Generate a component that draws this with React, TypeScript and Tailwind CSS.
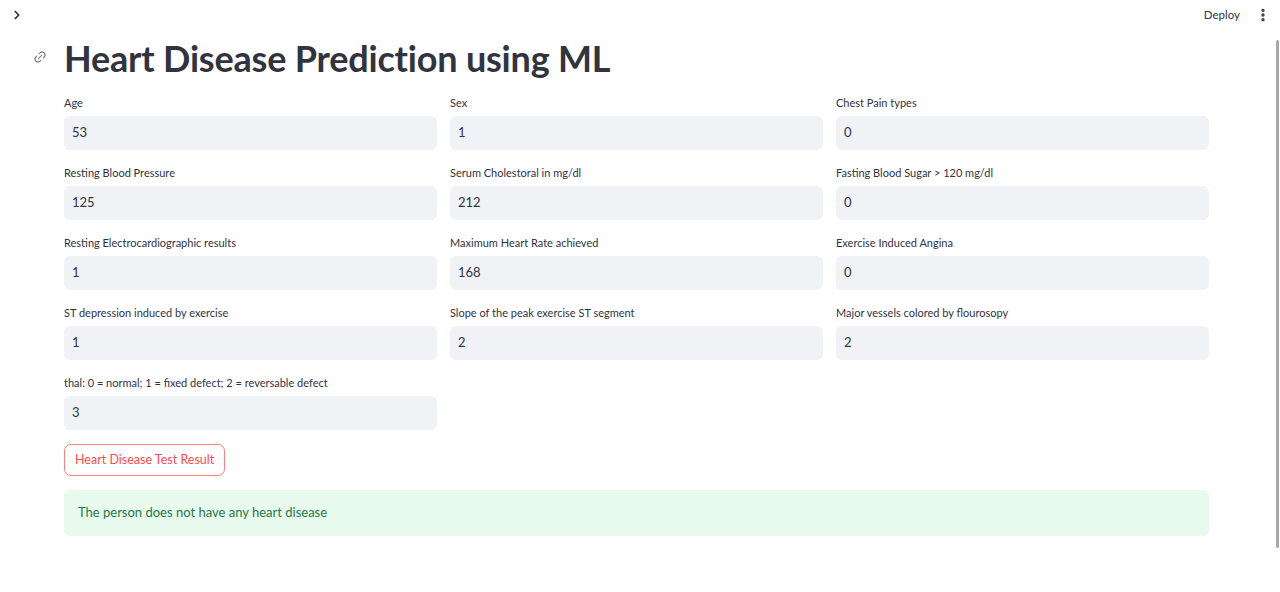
import { ChevronRight, EllipsisVertical, Link2 } from "lucide-react";

const FIELDS = [
  { label: "Age", value: "53" },
  { label: "Sex", value: "1" },
  { label: "Chest Pain types", value: "0" },
  { label: "Resting Blood Pressure", value: "125" },
  { label: "Serum Cholestoral in mg/dl", value: "212" },
  { label: "Fasting Blood Sugar > 120 mg/dl", value: "0" },
  { label: "Resting Electrocardiographic results", value: "1" },
  { label: "Maximum Heart Rate achieved", value: "168" },
  { label: "Exercise Induced Angina", value: "0" },
  { label: "ST depression induced by exercise", value: "1" },
  { label: "Slope of the peak exercise ST segment", value: "2" },
  { label: "Major vessels colored by flourosopy", value: "2" },
  { label: "thal: 0 = normal; 1 = fixed defect; 2 = reversable defect", value: "3" },
];

export default function App() {
  return (
    <div className="relative h-[592px] overflow-hidden bg-white font-['Lato',sans-serif] text-[#31333f]">
      <header className="flex h-[30px] items-center justify-between pl-[10px] pr-[9px]">
        <ChevronRight size={14} strokeWidth={3} className="text-[#31333f]" />
        <div className="flex items-center gap-[15px]">
          <span className="text-[11.5px]">Deploy</span>
          <EllipsisVertical size={16} strokeWidth={3} />
        </div>
      </header>

      <main className="pl-[64px] pr-[71px]">
        <div className="relative mt-[6px] flex h-[44px] items-center">
          <Link2 size={14} className="absolute left-[-31px] top-[14px] -rotate-45 text-[#7d808b]" />
          <h1 className="text-[36px] font-bold leading-none tracking-[-0.2px]">
            Heart Disease Prediction using ML
          </h1>
        </div>

        <div className="mt-[15px] grid grid-cols-3 gap-x-[13px] gap-y-[15px]">
          {FIELDS.map((f) => (
            <div key={f.label}>
              <label className="block h-[15px] text-[11px] leading-[15px]">{f.label}</label>
              <div className="mt-[6px] flex h-[34px] items-center rounded-[6px] bg-[#f0f2f6] px-[8px] text-[13px]">
                {f.value}
              </div>
            </div>
          ))}
        </div>

        <button className="mt-[14px] h-[32px] rounded-[7px] border border-[#ff4b4b]/70 px-[10px] text-[12.5px] text-[#ff4b4b]">
          Heart Disease Test Result
        </button>

        <div className="mt-[14px] flex h-[46px] items-center rounded-[6px] bg-[#e8f9ee] px-[14px] text-[13px] text-[#1e7a44]">
          The person does not have any heart disease
        </div>
      </main>

      <div className="absolute right-[1px] top-[40px] h-[508px] w-[3px] rounded bg-[#a7a7ad]" />
    </div>
  );
}
